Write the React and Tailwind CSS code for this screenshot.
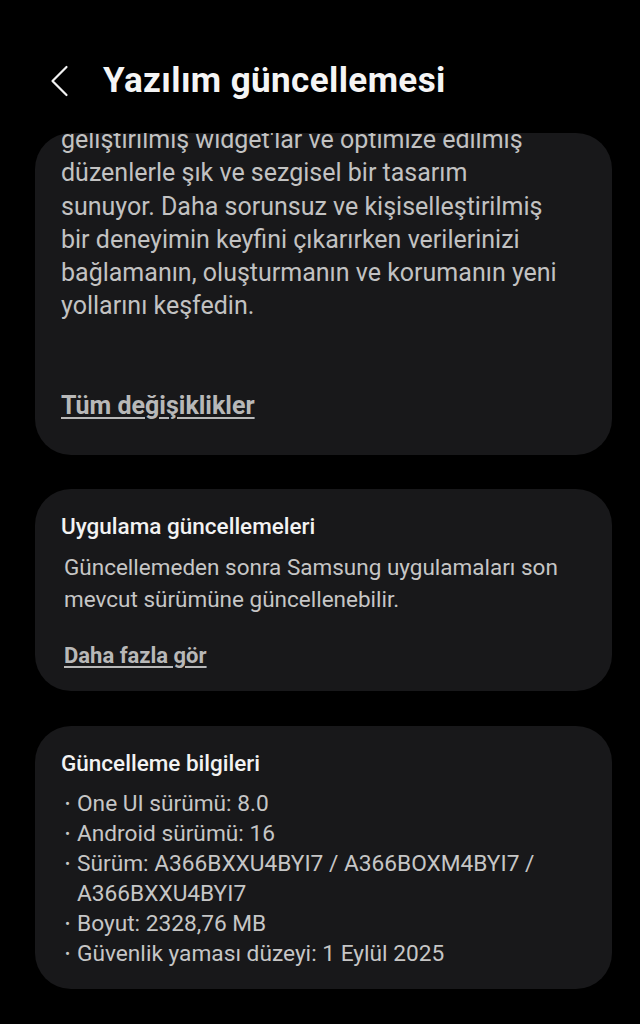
export default function App() {
  const notes = [
    "geliştirilmiş widget'lar ve optimize edilmiş",
    "düzenlerle şık ve sezgisel bir tasarım",
    "sunuyor. Daha sorunsuz ve kişiselleştirilmiş",
    "bir deneyimin keyfini çıkarırken verilerinizi",
    "bağlamanın, oluşturmanın ve korumanın yeni",
    "yollarını keşfedin.",
  ];

  const info = [
    "One UI sürümü: 8.0",
    "Android sürümü: 16",
    "Sürüm: A366BXXU4BYI7 / A366BOXM4BYI7 / A366BXXU4BYI7",
    "Boyut: 2328,76 MB",
    "Güvenlik yaması düzeyi: 1 Eylül 2025",
  ];

  return (
    <div className="min-h-[1024px] overflow-hidden bg-black font-['Roboto',sans-serif] antialiased">
      {/* Başlık */}
      <header className="flex h-[133px] items-start pt-[56px]">
        <div className="flex h-[50px] items-center">
          <svg
            className="ml-[50px] h-[32px] w-[19px]"
            viewBox="0 0 19 32"
            fill="none"
            stroke="#f2f2f2"
            strokeWidth="2.2"
            strokeLinecap="round"
            strokeLinejoin="round"
          >
            <polyline points="16.5,2 2.5,16 16.5,30" />
          </svg>
          <h1 className="ml-[34px] text-[35px] font-bold tracking-[0.4px] text-[#f5f5f5]">
            Yazılım güncellemesi
          </h1>
        </div>
      </header>

      {/* Kaydırılan alan: üstte kırpılıyor */}
      <div className="ml-[35px] mr-[28px] overflow-hidden rounded-t-[36px]">
        <section className="-mt-[10px] rounded-[36px] bg-[#18181a] px-[26px] pb-[33px]">
          <p className="text-[25px] leading-[33.3px] text-[#c2c2c2]">
            {notes.map((l) => (
              <span key={l} className="block whitespace-nowrap">
                {l}
              </span>
            ))}
          </p>
          <a className="mt-[66px] block text-[25px] font-bold leading-[33px] text-[#b8b8b8] underline decoration-[1.5px] underline-offset-[3px]">
            Tüm değişiklikler
          </a>
        </section>

        <section className="mt-[34px] rounded-[36px] bg-[#18181a] px-[26px] pb-[20px] pt-[23px]">
          <h2 className="text-[22.5px] font-medium leading-[28px] text-[#f2f2f2]">
            Uygulama güncellemeleri
          </h2>
          <p className="mt-[11px] pl-[3px] text-[22.5px] leading-[32px] text-[#c6c6c6]">
            Güncellemeden sonra Samsung uygulamaları son mevcut sürümüne
            güncellenebilir.
          </p>
          <a className="mt-[26px] block pl-[3px] text-[22px] font-bold leading-[30px] text-[#b8b8b8] underline decoration-[1.5px] underline-offset-[3px]">
            Daha fazla gör
          </a>
        </section>

        <section className="mt-[35px] rounded-[36px] bg-[#18181a] px-[26px] pb-[20px] pt-[23px]">
          <h2 className="text-[22.5px] font-medium leading-[28px] text-[#f2f2f2]">
            Güncelleme bilgileri
          </h2>
          <ul className="mt-[12px]">
            {info.map((t) => (
              <li
                key={t}
                className="flex pl-[4px] text-[22.7px] leading-[30px] text-[#c6c6c6]"
              >
                <span className="w-[12px] shrink-0 text-[15px]">•</span>
                <span className="pr-[30px]">{t}</span>
              </li>
            ))}
          </ul>
        </section>
      </div>
    </div>
  );
}
